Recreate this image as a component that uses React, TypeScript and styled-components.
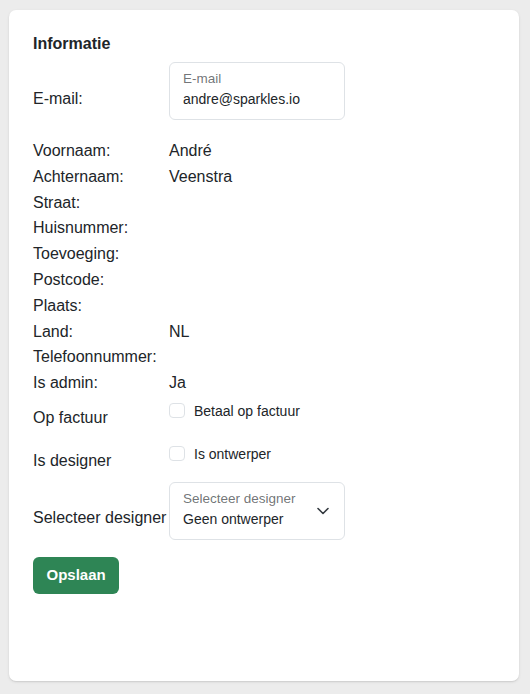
import React from "react";
import styled, { createGlobalStyle } from "styled-components";

const GlobalStyle = createGlobalStyle`
  html, body {
    margin: 0;
    padding: 0;
    background: #ececec;
  }
  body {
    font-family: "Liberation Sans", Arial, Helvetica, sans-serif;
    color: #212529;
    -webkit-font-smoothing: antialiased;
  }
`;

const Page = styled.div`
  min-height: 694px;
  box-sizing: border-box;
  padding: 10px 11px 13px 9px;
  display: flex;
`;

const Card = styled.section`
  flex: 1;
  background: #ffffff;
  border-radius: 7px;
  box-shadow: 0 1px 3px rgba(0, 0, 0, 0.1), 0 1px 1px rgba(0, 0, 0, 0.05);
  padding: 24px;
`;

const Title = styled.h2`
  margin: 0 0 9px;
  font-size: 16px;
  font-weight: 700;
  line-height: 19px;
`;

const FieldRow = styled.div<{ $top?: number; $bottom?: number }>`
  display: grid;
  grid-template-columns: 136px 176px;
  margin-top: ${(p) => p.$top ?? 0}px;
  margin-bottom: ${(p) => p.$bottom ?? 0}px;
`;

const FieldLabel = styled.label`
  align-self: end;
  padding-bottom: 9.5px;
  font-size: 16px;
  line-height: 24px;
  white-space: nowrap;
`;

const Field = styled.div`
  box-sizing: border-box;
  height: 58px;
  display: flex;
  align-items: center;
  border: 1px solid #dee2e6;
  border-radius: 6px;
  padding: 8px 15px 8px 13px;
  background: #fff;
`;

const FieldBody = styled.div`
  flex: 1;
  display: flex;
  flex-direction: column;
`;

const FloatLabel = styled.span`
  font-size: 13.5px;
  line-height: 16px;
  color: rgba(33, 37, 41, 0.65);
`;

const FieldValue = styled.span`
  font-size: 14px;
  line-height: 24px;
  color: #212529;
`;

const InfoRow = styled.div`
  display: grid;
  grid-template-columns: 136px 1fr;
  font-size: 16px;
  line-height: 25.8px;
`;

const CheckRow = styled.div`
  display: grid;
  grid-template-columns: 136px 1fr;
  height: 43px;
`;

const CheckRowLabel = styled.span`
  align-self: center;
  padding-top: 2px;
  font-size: 16px;
  line-height: 24px;
`;

const CheckOption = styled.label`
  align-self: start;
  padding-top: 7px;
  display: flex;
  align-items: center;
  gap: 9px;
  font-size: 14px;
  line-height: 16px;
`;

const CheckBox = styled.span`
  box-sizing: border-box;
  width: 16px;
  height: 15px;
  border: 1px solid #dee2e6;
  border-radius: 4px;
  background: #fff;
`;

const SaveButton = styled.button`
  margin-top: 17px;
  background: #2e8555;
  color: #ffffff;
  border: none;
  border-radius: 6px;
  padding: 6.5px 13.5px;
  font-family: inherit;
  font-size: 15px;
  font-weight: 700;
  line-height: 24px;
  cursor: pointer;
`;

const Chevron = () => (
  <svg width="12" height="8" viewBox="0 0 12 8" fill="none">
    <path
      d="M1 1.5 L6 6.5 L11 1.5"
      stroke="#343a40"
      strokeWidth="1.6"
      strokeLinecap="round"
      strokeLinejoin="round"
    />
  </svg>
);

const details: [string, string][] = [
  ["Voornaam:", "André"],
  ["Achternaam:", "Veenstra"],
  ["Straat:", ""],
  ["Huisnummer:", ""],
  ["Toevoeging:", ""],
  ["Postcode:", ""],
  ["Plaats:", ""],
  ["Land:", "NL"],
  ["Telefoonnummer:", ""],
  ["Is admin:", "Ja"],
];

export default function App() {
  return (
    <>
      <GlobalStyle />
      <Page>
        <Card>
          <Title>Informatie</Title>

          <FieldRow $bottom={18}>
            <FieldLabel>E-mail:</FieldLabel>
            <Field>
              <FieldBody>
                <FloatLabel>E-mail</FloatLabel>
                <FieldValue>andre@sparkles.io</FieldValue>
              </FieldBody>
            </Field>
          </FieldRow>

          {details.map(([label, value]) => (
            <InfoRow key={label}>
              <span>{label}</span>
              <span>{value}</span>
            </InfoRow>
          ))}

          <CheckRow>
            <CheckRowLabel>Op factuur</CheckRowLabel>
            <CheckOption>
              <CheckBox />
              Betaal op factuur
            </CheckOption>
          </CheckRow>

          <CheckRow>
            <CheckRowLabel>Is designer</CheckRowLabel>
            <CheckOption>
              <CheckBox />
              Is ontwerper
            </CheckOption>
          </CheckRow>

          <FieldRow>
            <FieldLabel>Selecteer designer</FieldLabel>
            <Field>
              <FieldBody>
                <FloatLabel>Selecteer designer</FloatLabel>
                <FieldValue>Geen ontwerper</FieldValue>
              </FieldBody>
              <Chevron />
            </Field>
          </FieldRow>

          <SaveButton type="button">Opslaan</SaveButton>
        </Card>
      </Page>
    </>
  );
}
